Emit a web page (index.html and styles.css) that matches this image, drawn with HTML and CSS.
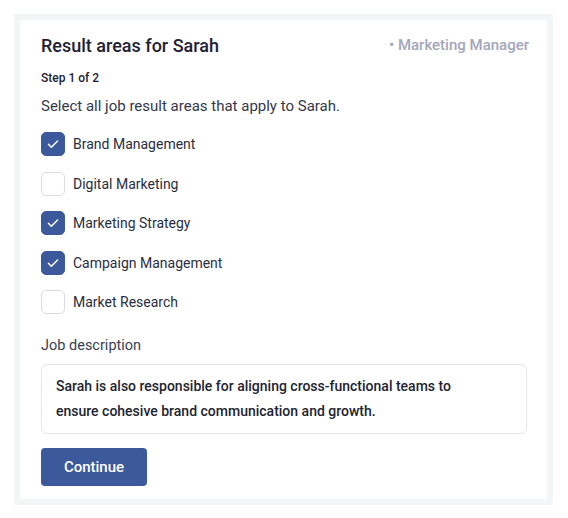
FILE: index.html
```html
<!DOCTYPE html>
<html>
<head>
<meta charset="utf-8">
<link rel="stylesheet" href="styles.css">
</head>
<body>
<div class="frame">
  <div class="card">
    <div class="header">
      <h1 class="title">Result areas for Sarah</h1>
      <span class="role">• Marketing Manager</span>
    </div>
    <div class="step">Step 1 of 2</div>
    <p class="prompt">Select all job result areas that apply to Sarah.</p>
    <ul class="options">
      <li class="option"><span class="box checked"><svg viewBox="0 0 24 24"><path d="M7 12.3l3.2 3.2L17 8.7"/></svg></span><span class="label">Brand Management</span></li>
      <li class="option"><span class="box"></span><span class="label">Digital Marketing</span></li>
      <li class="option"><span class="box checked"><svg viewBox="0 0 24 24"><path d="M7 12.3l3.2 3.2L17 8.7"/></svg></span><span class="label">Marketing Strategy</span></li>
      <li class="option"><span class="box checked"><svg viewBox="0 0 24 24"><path d="M7 12.3l3.2 3.2L17 8.7"/></svg></span><span class="label">Campaign Management</span></li>
      <li class="option"><span class="box"></span><span class="label">Market Research</span></li>
    </ul>
    <div class="field-label">Job description</div>
    <div class="textbox">Sarah is also responsible for aligning cross-functional teams to ensure cohesive brand communication and growth.</div>
    <button class="btn">Continue</button>
  </div>
</div>
</body>
</html>
```
FILE: styles.css
```css
* { box-sizing: border-box; }
html, body { margin: 0; padding: 0; background: #ffffff; }
body { font-family: Roboto, "Liberation Sans", sans-serif; color: #1f2233; }
.frame {
  margin: 14px 0 0 14px;
  width: 539px;
  height: 491px;
  background: #f3f6f6;
  padding: 6px;
}
.card {
  background: #ffffff;
  height: 100%;
  padding: 13px 21px 0 21px;
}
.header {
  display: flex;
  justify-content: space-between;
  align-items: center;
  height: 24px;
}
.title {
  margin: 0;
  font-size: 18px;
  font-weight: 500;
  color: #1e2133;
}
.role {
  font-size: 15px;
  font-weight: 500;
  color: #a4a6ba;
  margin-right: -3px;
}
.step {
  margin-top: 14px;
  font-size: 12px;
  font-weight: 500;
  color: #1e2133;
  line-height: 14px;
}
.prompt {
  margin: 11px 0 0 0;
  font-size: 15px;
  line-height: 20px;
  color: #353849;
}
.options {
  list-style: none;
  margin: 16px 0 0 0;
  padding: 0;
  display: flex;
  flex-direction: column;
  gap: 15.5px;
}
.option {
  display: flex;
  align-items: center;
  gap: 8px;
  height: 24px;
}
.box {
  width: 24px;
  height: 24px;
  border-radius: 5px;
  border: 1.5px solid #dcdde2;
  background: #fff;
  display: flex;
  align-items: center;
  justify-content: center;
}
.box.checked {
  background: #3c5a9b;
  border-color: #3c5a9b;
}
.box svg {
  width: 22px;
  height: 22px;
  fill: none;
  stroke: #ffffff;
  stroke-width: 1.6;
  stroke-linecap: round;
  stroke-linejoin: round;
}
.label {
  font-size: 14px;
  color: #2b2e3d;
}
.field-label {
  margin-top: 22px;
  font-size: 14.5px;
  line-height: 20px;
  color: #3b3e4f;
}
.textbox {
  margin-top: 8px;
  width: 486px;
  height: 70px;
  border: 1px solid #e4e6ea;
  border-radius: 6px;
  padding: 9px 60px 0 14px;
  font-size: 14px;
  font-weight: 500;
  line-height: 25px;
  color: #22242f;
}
.btn {
  margin-top: 14px;
  width: 106px;
  height: 38px;
  border: none;
  border-radius: 4px;
  background: #3c5a9b;
  color: #ffffff;
  font-family: Roboto, "Liberation Sans", sans-serif;
  font-size: 15px;
  font-weight: 500;
  padding: 0;
}
```
